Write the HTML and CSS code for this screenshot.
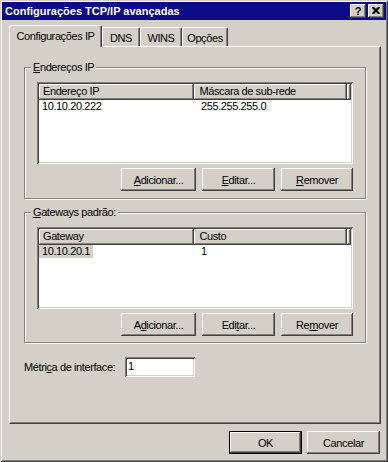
FILE: index.html
```html
<!DOCTYPE html>
<html lang="pt">
<head>
<meta charset="utf-8">
<title>Configurações TCP/IP avançadas</title>
<link rel="stylesheet" href="styles.css">
</head>
<body>
<div class="window">
  <div class="titlebar">
    <span class="title">Configurações TCP/IP avançadas</span>
    <div class="tbtns">
      <span class="tbtn q">?</span>
      <span class="tbtn"><svg width="8" height="7" viewBox="0 0 8 7"><path d="M0 0h2l2 2 2-2h2v1L5.5 3.5 8 6v1H6L4 5 2 7H0V6l2.5-2.5L0 1z" fill="#000"/></svg></span>
    </div>
  </div>
  <div class="content">
    <div class="tabs">
      <div class="tab active">Configurações IP</div>
      <div class="tab t-dns">DNS</div>
      <div class="tab t-wins">WINS</div>
      <div class="tab t-opc">Opções</div>
    </div>
    <div class="panel">
      <div class="group g1">
        <span class="legend"><u>E</u>ndereços IP</span>
        <div class="listview">
          <div class="lv-header">
            <div class="hcell c1">Endereço IP</div>
            <div class="hcell c2">Máscara de sub-rede</div>
            <div class="hcell c3"></div>
          </div>
          <div class="lv-row">
            <span class="cell c1">10.10.20.222</span>
            <span class="cell c2">255.255.255.0</span>
          </div>
        </div>
        <div class="btnrow">
          <span class="btn b-add"><u>A</u>dicionar...</span>
          <span class="btn b-edit"><u>E</u>ditar...</span>
          <span class="btn b-rem"><u>R</u>emover</span>
        </div>
      </div>
      <div class="group g2">
        <span class="legend"><u>G</u>ateways padrão:</span>
        <div class="listview">
          <div class="lv-header">
            <div class="hcell c1">Gateway</div>
            <div class="hcell c2">Custo</div>
            <div class="hcell c3"></div>
          </div>
          <div class="lv-row">
            <span class="cell c1 nopad"><span class="sel">10.10.20.1</span></span>
            <span class="cell c2">1</span>
          </div>
        </div>
        <div class="btnrow">
          <span class="btn b-add">A<u>d</u>icionar...</span>
          <span class="btn b-edit">Edi<u>t</u>ar...</span>
          <span class="btn b-rem">Re<u>m</u>over</span>
        </div>
      </div>
      <div class="metric">
        <span class="mlabel">Métri<u>c</u>a de interface:</span>
        <span class="input">1</span>
      </div>
    </div>
    <div class="footer">
      <span class="btn default">OK</span>
      <span class="btn">Cancelar</span>
    </div>
  </div>
</div>
</body>
</html>
```

FILE: styles.css
```css
* { box-sizing: border-box; }
html, body { margin: 0; padding: 0; }
body {
  width: 388px;
  height: 462px;
  overflow: hidden;
  background: #d4d0c8;
  font-family: "Liberation Sans", Arial, sans-serif;
  font-size: 11px;
  letter-spacing: -0.4px;
  color: #000;
}
u { text-decoration: underline; text-underline-offset: 1px; }

.window {
  width: 388px;
  height: 462px;
  padding: 2px;
  background: #d4d0c8;
  display: flex;
  flex-direction: column;
  box-shadow: inset 1px 1px #d4d0c8, inset -1px -1px #404040, inset 2px 2px #fff, inset -2px -2px #808080;
}

.titlebar {
  height: 18px;
  flex: none;
  background: #0c0c84;
  color: #fff;
  display: flex;
  align-items: center;
  justify-content: space-between;
  padding: 0 2px 0 3px;
}
.title { font-weight: bold; letter-spacing: 0; }
.tbtns { display: flex; gap: 2px; }
.tbtn {
  width: 16px;
  height: 14px;
  background: #d4d0c8;
  color: #000;
  display: flex;
  align-items: center;
  justify-content: center;
  box-shadow: inset -1px -1px #404040, inset 1px 1px #fff, inset -2px -2px #808080;
}
.tbtn.q { font-weight: bold; font-size: 11px; line-height: 14px; padding-bottom: 1px; }
.tbtn svg { display: block; margin-top: -1px; }

.content {
  flex: 1;
  padding: 5px 5px 0 7px;
  display: flex;
  flex-direction: column;
}

.tabs {
  display: flex;
  align-items: flex-end;
  height: 21px;
  position: relative;
  z-index: 2;
}
.tab {
  height: 19px;
  background: #d4d0c8;
  border-top: 1px solid #fff;
  border-left: 1px solid #fff;
  border-right: 1px solid #404040;
  border-radius: 2px 2px 0 0;
  box-shadow: inset -1px 0 #808080;
  display: flex;
  align-items: center;
  justify-content: center;
  padding-top: 1px;
}
.tab.active {
  width: 93px;
  height: 22px;
  margin-bottom: -1px;
  padding-bottom: 2px;
}
.t-dns { width: 38px; }
.t-wins { width: 42px; }
.t-opc { width: 46px; }

.panel {
  height: 378px;
  flex: none;
  border: 1px solid;
  border-color: #fff #404040 #404040 #fff;
  box-shadow: inset -1px -1px #808080;
  padding: 20px 14px 0 14px;
  display: flex;
  flex-direction: column;
}

.group {
  position: relative;
  border: 1px solid #808080;
  box-shadow: 1px 1px #fff, inset 1px 1px #fff;
  padding: 14px 12px 0 12px;
}
.g1 { height: 132px; }
.g2 { height: 131px; margin-top: 13px; }
.legend {
  position: absolute;
  top: -7px;
  left: 6px;
  padding: 0 2px;
  background: #d4d0c8;
  line-height: 13px;
}

.listview {
  height: 82px;
  background: #fff;
  padding: 2px;
  box-shadow: inset 1px 1px #808080, inset -1px -1px #fff, inset 2px 2px #404040, inset -2px -2px #d4d0c8;
}
.lv-header { display: flex; height: 16px; }
.hcell {
  background: #d4d0c8;
  box-shadow: inset -1px -1px #404040, inset 1px 1px #fff, inset -2px -2px #808080;
  line-height: 15px;
  padding-left: 4px;
  white-space: nowrap;
}
.hcell.c1 { width: 157px; }
.hcell.c2 { width: 154px; padding-left: 5px; }
.hcell.c3 { flex: 1; }
.lv-row { display: flex; height: 14px; line-height: 13px; }
.cell { white-space: nowrap; }
.cell.c1 { width: 157px; padding-left: 3px; }
.cell.c2 { padding-left: 5px; }
.cell.nopad { padding-left: 0; }
.sel { background: #d4d0c8; padding: 0 3px; display: inline-block; height: 13px; }

.btnrow {
  display: flex;
  justify-content: flex-end;
  gap: 6px;
  margin-top: 4px;
}
.btn {
  height: 23px;
  width: 73px;
  background: #d4d0c8;
  display: flex;
  align-items: center;
  justify-content: center;
  box-shadow: inset -1px -1px #404040, inset 1px 1px #fff, inset -2px -2px #808080;
}
.b-add { width: 75px; }
.b-edit { width: 73px; }
.b-rem { width: 72px; }
.btn.default { border: 1px solid #000; }

.metric {
  display: flex;
  align-items: center;
  margin-top: 14px;
}
.mlabel { width: 101px; }
.input {
  width: 70px;
  height: 20px;
  background: #fff;
  padding: 2px 0 0 3px;
  line-height: 15px;
  box-shadow: inset 1px 1px #808080, inset -1px -1px #fff, inset 2px 2px #404040, inset -2px -2px #d4d0c8;
}

.footer {
  display: flex;
  justify-content: flex-end;
  gap: 5px;
  padding-top: 7px;
  padding-right: 1px;
}
```
